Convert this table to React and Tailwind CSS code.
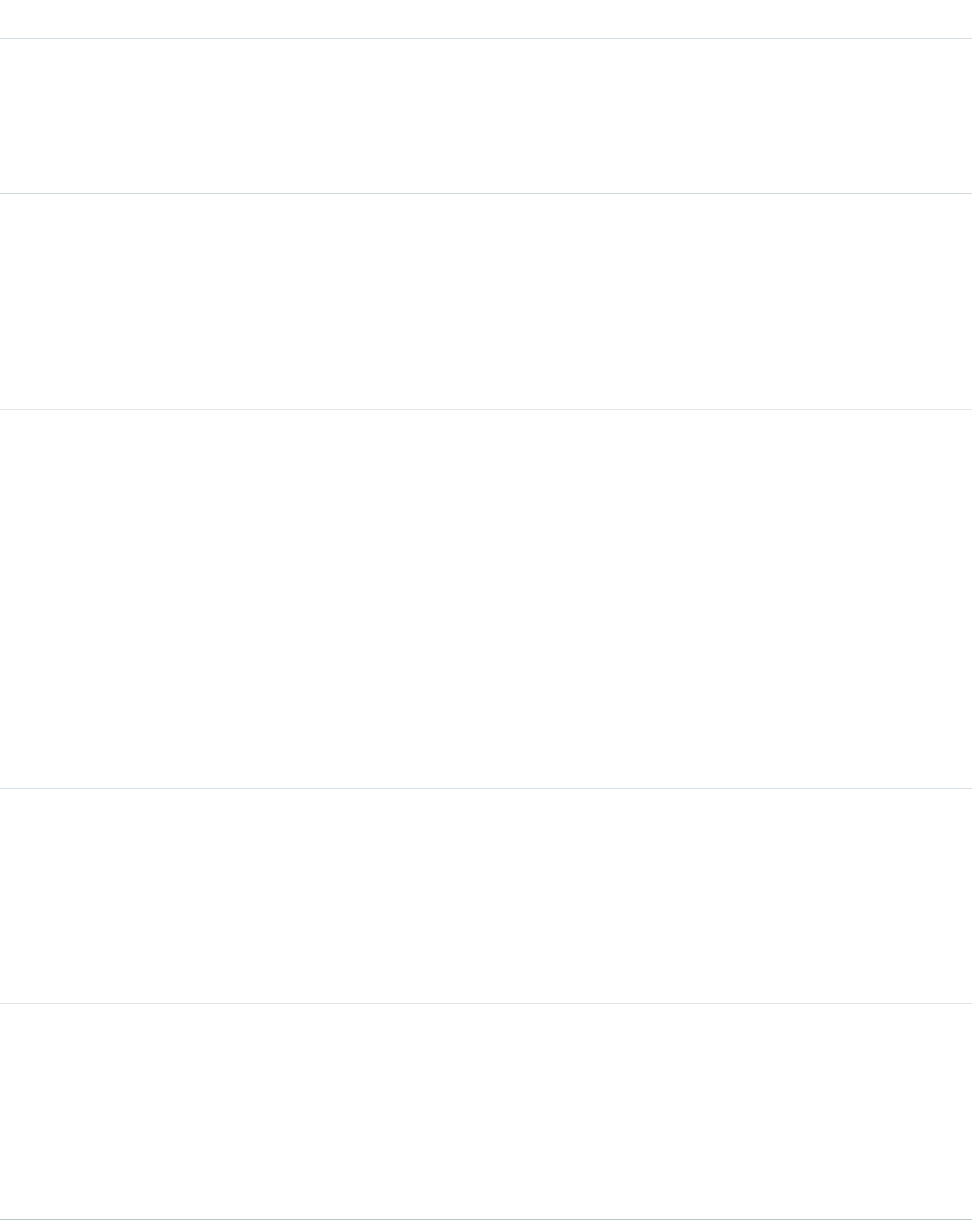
import React from "react";

const rows = [
  { h: "h-[39px]", line: "border-[#d3dde2]" },
  { h: "h-[155px]", line: "border-[#d0dada]" },
  { h: "h-[216px]", line: "border-[#e2e8ea]" },
  { h: "h-[379px]", line: "border-[#d6dfe5]" },
  { h: "h-[215px]", line: "border-[#e0e5e8]" },
  { h: "h-[216px]", line: "border-[#b9c5c7]" },
];

export default function App() {
  return (
    <main className="min-h-screen bg-white font-['Liberation_Sans',sans-serif]">
      <div className="w-[972px] flex flex-col">
        {rows.map((row, i) => (
          <section key={i} className={`${row.h} border-b ${row.line}`} />
        ))}
      </div>
    </main>
  );
}
